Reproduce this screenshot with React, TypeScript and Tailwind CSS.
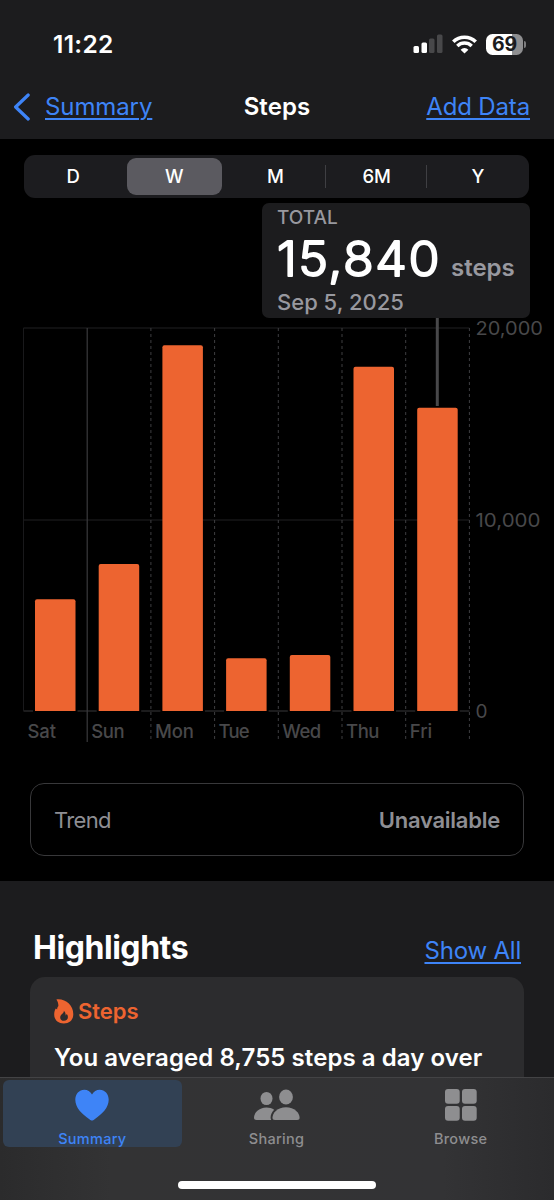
import type { ReactNode } from "react";
import { clsx } from "clsx";

type Day = { label: string; steps: number; labelWidth: number };

const DAYS: Day[] = [
  { label: "Sat", steps: 5830, labelWidth: 28.5 },
  { label: "Sun", steps: 7680, labelWidth: 33.5 },
  { label: "Mon", steps: 19100, labelWidth: 39 },
  { label: "Tue", steps: 2750, labelWidth: 31 },
  { label: "Wed", steps: 2930, labelWidth: 39 },
  { label: "Thu", steps: 17970, labelWidth: 33.5 },
  { label: "Fri", steps: 15840, labelWidth: 22.5 },
];

const RANGES = ["D", "W", "M", "6M", "Y"];

// Chart geometry, in px of the svg
const LEFT = 23.5;
const COL = 63.7;
const TOP = 10;
const BASE = 393;
const FLOOR = 424;
const BAR_W = 40.5;

const barPath = (x: number, y: number) =>
  `M${x} ${BASE}V${y + 2}a2 2 0 0 1 2-2h${BAR_W - 4}a2 2 0 0 1 2 2V${BASE}Z`;

const StatusIcons = () => (
  <div className="flex items-center">
    <svg width="30" height="20" viewBox="0 0 30 20">
      <rect x="0.5" y="12" width="5.5" height="7" rx="1.5" fill="#fff" />
      <rect x="8.5" y="8.5" width="5.5" height="10.5" rx="1.5" fill="#fff" />
      <rect x="16" y="4.5" width="5.5" height="14.5" rx="1.5" fill="#48484a" />
      <rect x="24" y="0.5" width="5.5" height="18.5" rx="1.5" fill="#48484a" />
    </svg>
    <svg width="25" height="19" viewBox="0 0 25 19" className="ml-[9px]" fill="none" stroke="#fff">
      <path d="M1.3 6.8a16 16 0 0 1 22.4 0" strokeWidth="3.6" />
      <path d="M5.3 11a10.3 10.3 0 0 1 14.4 0" strokeWidth="3.4" />
      <path d="M12.5 18.6 8.6 14.7a5.6 5.6 0 0 1 7.8 0Z" fill="#fff" stroke="none" />
    </svg>
    <div className="ml-[9px] flex h-[21px] w-[37px] items-center justify-center rounded-[6.5px] bg-[linear-gradient(90deg,#fff_69%,#8e8e90_69%)] text-[19.5px] leading-[21px] font-bold tracking-[-0.2px] text-[#1c1c1e]">
      69
    </div>
    <div className="ml-px h-[7px] w-[2px] rounded-r-full bg-[#7c7c7e]" />
  </div>
);

const Header = () => (
  <header className="h-[139px] bg-[#1c1c1e]">
    <div className="flex h-[75px] items-center justify-between pt-[13px] pr-[28px] pl-[53px]">
      <span className="text-[24.5px] font-semibold tracking-[0.3px]">11:22</span>
      <StatusIcons />
    </div>
    <div className="grid h-[64px] grid-cols-[1fr_auto_1fr] items-center px-6">
      <div className="-ml-[11px] flex items-center">
        <svg width="18" height="28" viewBox="0 0 18 28" fill="none" stroke="#3e84f7" strokeWidth="3.2" strokeLinecap="round" strokeLinejoin="round">
          <path d="M15.2 2 2.6 14l12.6 12" />
        </svg>
        <Link className="ml-[14px] tracking-[-0.1px]">Summary</Link>
      </div>
      <h1 className="text-[24px] font-semibold tracking-[0.1px]">Steps</h1>
      <div className="text-right">
        <Link className="tracking-[-0.15px]">Add Data</Link>
      </div>
    </div>
  </header>
);

const Link = ({ children, className }: { children: ReactNode; className?: string }) => (
  <a
    href="#"
    className={clsx(
      "text-[24px] text-[#3e84f7] underline decoration-[1.5px] underline-offset-[3px]",
      className,
    )}
  >
    {children}
  </a>
);

const RangePicker = ({ selected }: { selected: string }) => (
  <div className="mx-6 flex h-[43px] w-[505px] rounded-[11px] bg-[#1c1c1f] py-[3px]">
    <div className="-ml-[1.5px] flex">
      {RANGES.map((range, i) => (
        <div key={range} className="flex w-[101.2px] items-center">
          <button
            type="button"
            className={clsx(
              "mr-[2px] ml-[3px] h-full flex-1 rounded-[9px] text-[18.5px] font-[450]",
              range === selected && "bg-[#5b5a60]",
            )}
          >
            {range}
          </button>
          <div className={clsx("h-[23px] w-px", i === 2 || i === 3 ? "bg-[#3f3f43]" : "bg-transparent")} />
        </div>
      ))}
    </div>
  </div>
);

const TotalCallout = () => (
  <div className="mt-[5px] mr-6 ml-auto h-[115px] w-[268px] rounded-[7px] bg-[#1c1c1e] pt-[4px] pl-[15px] text-[#98989f]">
    <div className="text-[19px] leading-[22px] font-medium">TOTAL</div>
    <div className="flex h-[61px] items-baseline">
      <svg width="168" height="47" viewBox="0 0 168 47" className="overflow-visible">
        <text
          x="0"
          y="47"
          textLength="164"
          lengthAdjust="spacingAndGlyphs"
          fill="#fff"
          stroke="#fff"
          strokeWidth="2"
          strokeLinejoin="round"
          className="text-[48.5px] font-light tracking-[1.5px]"
        >
          15,840
        </text>
      </svg>
      <span className="ml-[6px] text-[24px] leading-[28px] font-semibold">steps</span>
    </div>
    <div className="text-[22px] leading-[24px] font-medium">Sep 5, 2025</div>
  </div>
);

const StepsChart = () => {
  const right = LEFT + COL * 7;
  return (
    <svg width="554" height="426" viewBox="0 0 554 426" className="block">
      {[TOP, 202, BASE].map((y) => (
        <line key={y} x1={LEFT} x2={right} y1={y} y2={y} stroke={y === BASE ? "#38383a" : "#202022"} />
      ))}
      <line x1={LEFT} x2={LEFT} y1={TOP} y2={BASE} stroke="#19191b" />
      <line x1={LEFT + COL} x2={LEFT + COL} y1={TOP} y2={FLOOR} stroke="#3a3a3d" strokeWidth="1.2" />
      {[2, 3, 4, 5, 6, 7].map((i) => (
        <line
          key={i}
          x1={LEFT + COL * i}
          x2={LEFT + COL * i}
          y1={TOP}
          y2={FLOOR}
          stroke="#3e3e41"
          strokeDasharray="3 3"
        />
      ))}
      {DAYS.map((day, i) => {
        const x = LEFT + COL * i;
        return (
          <g key={day.label}>
            <rect x={x + 9.5} y={BASE - 1} width={BAR_W + 4} height="2" fill="#000" />
            <path d={barPath(x + 11.5, BASE - (day.steps / 20000) * (BASE - TOP))} fill="#ed6430" />
            <text x={x + 4} y="419.5" textLength={day.labelWidth} fill="#48484a" className="text-[18.5px] font-[450]">
              {day.label}
            </text>
          </g>
        );
      })}
      <line x1="437.3" x2="437.3" y1="0" y2="88" stroke="#48484a" strokeWidth="3" />
      <g fill="#48484a" className="text-[19px]">
        <text x="475.5" y="17" textLength="67.5" lengthAdjust="spacingAndGlyphs">20,000</text>
        <text x="475.5" y="209" textLength="65" lengthAdjust="spacingAndGlyphs">10,000</text>
        <text x="475.5" y="400" textLength="12" lengthAdjust="spacingAndGlyphs">0</text>
      </g>
    </svg>
  );
};

const FlameIcon = () => (
  <svg width="20" height="25" viewBox="0 0 20 25" fill="#ed6430">
    <path
      fillRule="evenodd"
      d="M2.4.4C11.4-.7 19.3 6 19.3 15.2c0 5.6-3.8 9.3-9.5 9.3S.2 20.900.2 15.4c0-2.500.5-4.400 1.600-6 .6.3 1 .6 1.300 1C3.200 9 3.500 8 4.400 7 4.400 4.400 3.800 2.300 2.400.4ZM9.800 11.800c.6 2.400-3.600 3.600-3.600 6.600 0 2.100 1.600 3.400 3.800 3.400s3.900-1.400 3.900-3.600c0-1.400-.5-2.400-1.300-3.100-.1.700-.4 1.100-.9 1.400 0-1.900-.5-3.600-1.900-4.700Z"
    />
  </svg>
);

const Highlights = () => (
  <section className="flex-1 overflow-hidden bg-[#1c1c1e]">
    <div className="flex items-baseline justify-between pt-[45px] pr-[33px] pl-[33px]">
      <h2 className="text-[32px] leading-[44px] font-bold tracking-[-0.45px]">Highlights</h2>
      <Link className="tracking-[-0.2px]">Show All</Link>
    </div>
    <div className="mx-[30px] mt-[7px] h-[140px] rounded-[15px] bg-[#2c2c2e] px-6 pt-[20px]">
      <div className="flex items-center gap-1 text-[22px] leading-[28px] font-semibold text-[#ed6430]">
        <FlameIcon />
        Steps
      </div>
      <p className="mt-[18px] text-[24px] leading-[30px] font-semibold tracking-[0.06px] whitespace-nowrap">
        You averaged 8,755 steps a day over
      </p>
    </div>
  </section>
);

const HeartIcon = () => (
  <svg width="34" height="32" viewBox="0 0 34 32" fill="#3e84f7" className="shrink-0">
    <path d="M17 31.5c-.7 0-1.500-.6-2.300-1.100C6.500 25 .3 18.500.3 10.800.3 5 4.200.8 9.300.8c3.300 0 6 1.700 7.700 4.600C18.700 2.500 21.400.8 24.700.8c5.100 0 9 4.200 9 10 0 7.700-6.200 14.200-14.400 19.600-.8.5-1.600 1.100-2.300 1.100Z" />
  </svg>
);

const PeopleIcon = () => (
  <svg width="46" height="32" viewBox="0 0 46 32" fill="#8e8e90" className="shrink-0">
    <ellipse cx="12.5" cy="9.5" rx="6" ry="6.6" />
    <path d="M2.500 31C.8 31 0 30.200 0 28.800 0 24 5 18.600 12.500 18.600c3 0 5.600.8 7.700 2.200-2.300 2.300-3.600 5-3.600 7.800 0 .9.200 1.700.6 2.400Z" />
    <ellipse cx="32" cy="8" rx="6.9" ry="7.5" />
    <path d="M21 31c-1.700 0-2.500-.8-2.500-2.200C18.500 24 23.600 18.300 32 18.300S45.600 24 45.600 28.800c0 1.400-.8 2.200-2.500 2.200Z" />
  </svg>
);

const BrowseIcon = () => (
  <svg width="32" height="32" viewBox="0 0 32 32" fill="#8e8e90" className="shrink-0">
    <rect x="0" y="0" width="14.7" height="14.7" rx="3" />
    <rect x="17" y="0" width="14.7" height="14.7" rx="3" />
    <rect x="0" y="17" width="14.7" height="14.7" rx="3" />
    <rect x="17" y="17" width="14.7" height="14.7" rx="3" />
  </svg>
);

const Tab = ({ icon, label, active }: { icon: ReactNode; label: string; active?: boolean }) => (
  <button
    type="button"
    className={clsx(
      "flex h-[67px] flex-1 flex-col items-center rounded-[6px] pt-[9px] text-[14.5px] font-medium",
      active ? "bg-[#324154] text-[#3e84f7]" : "text-[#8e8e90]",
    )}
  >
    {icon}
    <span className="mt-[8px] leading-[20px] tracking-[0.3px]">{label}</span>
  </button>
);

const TabBar = () => (
  <nav className="h-[123px] border-t border-[#434345] bg-[linear-gradient(90deg,#2b2b2c_0%,#333334_20%,#333335_80%,#2b2b2d_100%)] pt-[2px] pr-[4px] pl-[3px]">
    <div className="flex gap-[5.5px]">
      <Tab icon={<HeartIcon />} label="Summary" active />
      <Tab icon={<PeopleIcon />} label="Sharing" />
      <Tab icon={<BrowseIcon />} label="Browse" />
    </div>
    <div className="mx-auto mt-[34px] h-[8px] w-[198px] rounded-full bg-white" />
  </nav>
);

export default function App() {
  return (
    <div className="flex h-[1200px] w-[554px] flex-col overflow-hidden bg-black font-[Inter,sans-serif] text-white">
      <Header />
      <main className="flex h-[742px] flex-col pt-4">
        <RangePicker selected="W" />
        <TotalCallout />
        <StepsChart />
        <div className="mx-[30px] mt-[39px] flex h-[73px] items-center justify-between rounded-[14px] border-[1.5px] border-[#38383a] px-[23px] pt-[2px] text-[22px] text-[#8e8e93]">
          <span className="tracking-[-0.65px]">Trend</span>
          <span className="font-semibold tracking-[-0.25px]">Unavailable</span>
        </div>
      </main>
      <Highlights />
      <TabBar />
    </div>
  );
}
